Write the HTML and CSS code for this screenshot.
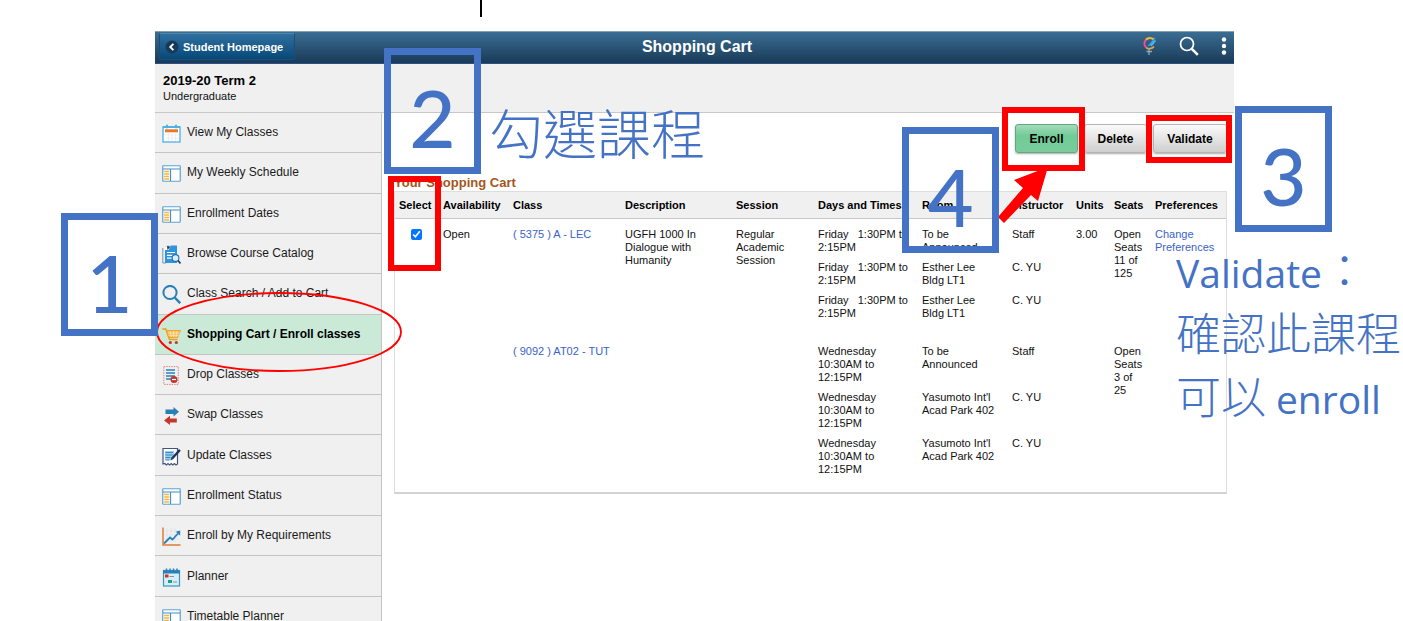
FILE: index.html
```html
<!DOCTYPE html>
<html lang="zh-Hant">
<head>
<meta charset="utf-8">
<title>Shopping Cart</title>
<link rel="stylesheet" href="styles.css">
</head>
<body>
<svg class="defs" aria-hidden="true">
  <symbol id="i-list" viewBox="0 0 19 17">
    <rect x=".75" y=".75" width="17.5" height="15.5" rx=".5" fill="#fff" stroke="#5aa3d3" stroke-width="1.2"/>
    <path d="M1 4h17M8.500 4v12" stroke="#4390c6" stroke-width="1.2"/>
    <path d="M2.200 6.500h4.800M2.200 9h4.800M2.200 11.500h4.800M2.200 14h4.800" stroke="#f5b53a" stroke-width="1.500"/>
  </symbol>
</svg>
<div class="page">
  <header class="topbar">
    <button class="back" type="button">
      <svg class="back-icon" viewBox="0 0 14 14"><circle cx="7" cy="7" r="6.5" fill="#17395a"/><path d="M8.4 3.8 5.2 7l3.2 3.2" fill="none" stroke="#fff" stroke-width="1.8"/></svg>
      Student Homepage
    </button>
    <h1 class="title">Shopping Cart</h1>
    <div class="tools">
      <button class="tool" type="button" aria-label="Navigator">
        <svg width="14" height="20" viewBox="0 0 14 20" fill="none"><path d="M3.2 11.5A5.2 5.2 0 0 1 3 3.800" stroke="#ef4f8f" stroke-width="2"/><path d="M3 3.800A5.200 5.200 0 0 1 10.500 3.400" stroke="#f5b52e" stroke-width="2.200"/><path d="M3.200 11.500C5 13.500 9 13 11 10.500" stroke="#f0a63a" stroke-width="1.800"/><path d="M12.500 1 4 10.500 10.500 8.500Z" fill="#39a5e8"/><path d="M12.500 4.500 8 10" stroke="#4db3ef" stroke-width="1.500"/><path d="M6 12v7M3.500 15.500h5.500" stroke="#8fa9bb" stroke-width="1.300"/></svg>
      </button>
      <button class="tool" type="button" aria-label="Search">
        <svg width="20" height="20" viewBox="0 0 20 20" fill="none" stroke="#fff"><circle cx="8" cy="8" r="6.500" stroke-width="1.700"/><path d="m12.800 12.800 6 6" stroke-width="2.600"/></svg>
      </button>
      <button class="tool" type="button" aria-label="Actions">
        <svg width="6" height="18" viewBox="0 0 6 18" fill="#fff"><circle cx="3" cy="2.500" r="2.200"/><circle cx="3" cy="9" r="2.200"/><circle cx="3" cy="15.500" r="2.200"/></svg>
      </button>
    </div>
  </header>
  <section class="term">
    <h2 class="term-name">2019-20 Term 2</h2>
    <p class="term-career">Undergraduate</p>
  </section>
  <div class="columns">
    <nav class="side">
      <a class="item" href="#"><svg class="icon" viewBox="0 0 19 19"><rect x="1" y="3" width="17" height="15" fill="#fff" stroke="#4fb0e5" stroke-width="1.300"/><path d="M1 3h17" stroke="#4fb0e5" stroke-width="2"/><path d="M5 .8v3.500M14 .8v3.500" stroke="#4fb0e5" stroke-width="2"/><path d="M3 6.800h13" stroke="#e5782a" stroke-width="3"/><path d="M3 11h13M3 14h13M6.500 9v8M10 9v8M13.500 9v8" stroke="#e4eaee" stroke-width=".7"/></svg>View My Classes</a>
      <a class="item" href="#"><svg class="icon"><use href="#i-list"/></svg>My Weekly Schedule</a>
      <a class="item" href="#"><svg class="icon"><use href="#i-list"/></svg>Enrollment Dates</a>
      <a class="item" href="#"><svg class="icon" viewBox="0 0 19 19"><path d="M.8 3v15h3" fill="none" stroke="#7893aa"/><path d="M3 2 5 .5h10v17.500H3Z" fill="#2f94db"/><path d="M3 5V2L5 .5h4L6.500 5Z" fill="#fff"/><path d="m5 1 3.500.5L5.500 5Z" fill="#223a5c"/><path d="M5 7.500h8M5 10.300h6M5 13.100h5" stroke="#fff" stroke-width="1.200"/><circle cx="13.500" cy="13" r="3.400" fill="#d9f1ff" stroke="#1c6fae" stroke-width="1.100"/><path d="m16 15.500 2.500 3" stroke="#223a5c" stroke-width="1.700"/></svg>Browse Course Catalog</a>
      <a class="item" href="#"><svg class="icon" viewBox="0 0 19 19" fill="none" stroke="#2980b9"><circle cx="8" cy="7.500" r="6.600" stroke-width="2"/><path d="m12.700 12.500 5.500 5.700" stroke-width="2.500"/></svg>Class Search / Add to Cart</a>
      <a class="item current" href="#" aria-current="page"><svg class="icon" viewBox="0 0 19 19"><path d="M.3 3h3.500l3.700 10.500h8" fill="none" stroke="#f39c12" stroke-width="1.500"/><path d="M4.500 4.500h14L15.700 11.500H7Z" fill="#f8bd5b" stroke="#f39c12" stroke-width=".8"/><path d="M8 5l1.200 6M11.500 5v6M15 5l-1 6M5.800 7h12M6.400 9.300h10.500" stroke="#fdecc8" stroke-width=".7"/><circle cx="8.300" cy="16.500" r="1.600" fill="#c0392b"/><circle cx="14.300" cy="16.500" r="1.600" fill="#c0392b"/></svg>Shopping Cart / Enroll classes</a>
      <a class="item" href="#"><svg class="icon" viewBox="0 0 19 19"><rect x="1.800" y=".6" width="14.500" height="17.800" fill="none" stroke="#d98880" stroke-dasharray="1.500 1"/><path d="M4 4h9M4 7h9M4 10h9M4 13h5" stroke="#2980b9" stroke-width="1.700"/><circle cx="12" cy="13.500" r="3.500" fill="#c0392b"/><path d="M10 13.500h4" stroke="#fff" stroke-width="1.200"/></svg>Drop Classes</a>
      <a class="item" href="#"><svg class="icon" viewBox="0 0 19 19"><path d="M3.500 3.500h8V1l5.500 4.800-5.500 4.700V8h-8Z" fill="#2980b9"/><path d="M14.800 12.500H8V9.800l-6 4.600L8 19v-2.500h6.800Z" fill="#c0392b"/></svg>Swap Classes</a>
      <a class="item" href="#"><svg class="icon" viewBox="0 0 19 19"><path d="M1 17V1.500h14.500V17l-1.500 1-1.600-1.500L10.800 18l-1.600-1.500L7.600 18 6 16.500 4.400 18 2.800 16.500Z" fill="#fff" stroke="#44527e" stroke-width="1.200"/><path d="M3 4h9v7l-2 2H3Z" fill="#9bcdf0"/><path d="M3.500 5.500h7.500M3.500 8h7M3.500 10.500h5M3.500 13h4" stroke="#3788c4" stroke-width="1.100"/><path d="m8.500 13.500 1-3 7.500-8.500 1.800 1.700-7.600 8.300Z" fill="#223255"/></svg>Update Classes</a>
      <a class="item" href="#"><svg class="icon"><use href="#i-list"/></svg>Enrollment Status</a>
      <a class="item" href="#"><svg class="icon" viewBox="0 0 19 19" fill="none"><path d="M5 1v14M9 1v14M13 1v14M2 4h15M2 8h15M2 12h15" stroke="#dde1e4" stroke-width=".7"/><path d="M1 .5V18h17.500" stroke="#e07b39" stroke-width="1.500"/><path d="m2 16.500 6-6 2.500 2L16 6.500" stroke="#2980b9" stroke-width="1.800"/><path d="M18.200 3.500v5.200l-4.500-4Z" fill="#2980b9"/></svg>Enroll by My Requirements</a>
      <a class="item" href="#"><svg class="icon" viewBox="0 0 19 19"><rect x="1.500" y="2.500" width="16" height="15.500" fill="#d9edf7" stroke="#3498c9" stroke-width="1.200"/><path d="M1 2.500h17v3H1Z" fill="#2980b9"/><path d="M4.500.5v3M8 .5v3M11.500.5v3M15 .5v3" stroke="#2980b9" stroke-width="1.500"/><path d="M3 6.500h3.500v3H3Z" fill="#d62e20"/><path d="M6 12h4v3H6Z" fill="#16a085"/><path d="M7.500 8.500h4.500M11 14h4" stroke="#8195a0" stroke-width="1.100"/></svg>Planner</a>
      <a class="item" href="#"><svg class="icon"><use href="#i-list"/></svg>Timetable Planner</a>
    </nav>
    <main class="main">
      <div class="actions">
        <button class="btn btn-enroll" type="button">Enroll</button>
        <button class="btn" type="button">Delete</button>
        <button class="btn btn-validate" type="button">Validate</button>
      </div>
      <table class="cart">
        <caption class="cart-title">Your Shopping Cart</caption>
        <colgroup><col class="c-select"><col class="c-avail"><col class="c-class"><col class="c-desc"><col class="c-session"><col class="c-days"><col class="c-room"><col class="c-inst"><col class="c-units"><col class="c-seats"><col class="c-pref"></colgroup>
        <thead>
          <tr><th>Select</th><th>Availability</th><th>Class</th><th>Description</th><th>Session</th><th>Days and Times</th><th>Room</th><th>Instructor</th><th>Units</th><th>Seats</th><th>Preferences</th></tr>
        </thead>
        <tbody>
          <tr class="first">
            <td rowspan="3" class="pick"><input class="check" type="checkbox" checked aria-label="Select UGFH 1000"></td>
            <td rowspan="3">Open</td>
            <td rowspan="3"><a class="link" href="#">( 5375 ) A - LEC</a></td>
            <td rowspan="3">UGFH 1000 In<br>Dialogue with<br>Humanity</td>
            <td rowspan="3">Regular<br>Academic<br>Session</td>
            <td>Friday &nbsp; 1:30PM to<br>2:15PM</td><td>To be<br>Announced</td><td>Staff</td>
            <td rowspan="3">3.00</td>
            <td rowspan="3">Open<br>Seats<br>11 of<br>125</td>
            <td rowspan="3"><a class="link" href="#">Change<br>Preferences</a></td>
          </tr>
          <tr><td>Friday &nbsp; 1:30PM to<br>2:15PM</td><td>Esther Lee<br>Bldg LT1</td><td>C. YU</td></tr>
          <tr><td>Friday &nbsp; 1:30PM to<br>2:15PM</td><td>Esther Lee<br>Bldg LT1</td><td>C. YU</td></tr>
        </tbody>
        <tbody>
          <tr class="first second">
            <td rowspan="3"></td><td rowspan="3"></td>
            <td rowspan="3"><a class="link" href="#">( 9092 ) AT02 - TUT</a></td>
            <td rowspan="3"></td><td rowspan="3"></td>
            <td>Wednesday<br>10:30AM to<br>12:15PM</td><td>To be<br>Announced</td><td>Staff</td>
            <td rowspan="3"></td>
            <td rowspan="3">Open<br>Seats<br>3 of<br>25</td>
            <td rowspan="3"></td>
          </tr>
          <tr><td>Wednesday<br>10:30AM to<br>12:15PM</td><td>Yasumoto Int'l<br>Acad Park 402</td><td>C. YU</td></tr>
          <tr><td>Wednesday<br>10:30AM to<br>12:15PM</td><td>Yasumoto Int'l<br>Acad Park 402</td><td>C. YU</td></tr>
        </tbody>
      </table>
    </main>
  </div>
</div>
<div class="notes">
  <div class="cursor"></div>
  <svg class="oval" viewBox="0 0 246 80"><ellipse cx="123" cy="40" rx="122" ry="39" fill="none" stroke="#f00" stroke-width="1.800"/></svg>
  <svg class="arrow" viewBox="0 0 50 58"><path d="M50 0 40 34 33 28 6 56 0 50 25 21 16 13Z" fill="#f00"/></svg>
  <div class="frame frame-select"></div>
  <div class="frame frame-enroll"></div>
  <div class="frame frame-validate"></div>
  <div class="step step-1">1</div>
  <div class="step step-2">2</div>
  <div class="step step-3">3</div>
  <div class="step step-4">4</div>
  <p class="hint hint-select">勾選課程</p>
  <div class="hint hint-validate">
    <p class="hint-line"><span class="latin">Validate</span>：</p>
    <p class="hint-line">確認此課程</p>
    <p class="hint-line">可以 <span class="latin">enroll</span></p>
  </div>
</div>
</body>
</html>
```

FILE: styles.css
```css
* { box-sizing: border-box; }
body {
  margin: 0;
  height: 100vh;
  overflow: hidden;
  background: #fff;
  color: #111;
  font: 12px/13px "Liberation Sans", Arial, sans-serif;
}
h1, h2, p { margin: 0; }
button { font-family: inherit; cursor: pointer; }
a { text-decoration: none; }
.defs { position: absolute; width: 0; height: 0; }

.page { margin: 31px 169px 0 155px; }

.topbar {
  display: grid;
  grid-template-columns: 1fr auto 1fr;
  align-items: center;
  height: 33px;
  padding: 0 7px 2px 4px;
  color: #fff;
  background: linear-gradient(#3a6d93, #1a3a57);
  border-top: 1px solid #8a9da8;
  border-bottom: 1px solid #2a5288;
}
.back {
  justify-self: start;
  display: flex;
  align-items: center;
  gap: 4px;
  height: 27px;
  padding: 0 11px 0 5px;
  border: 1px solid #1c4d75;
  border-top-color: #4e86ae;
  border-radius: 2px;
  background: linear-gradient(#306f9f, #064978);
  color: #fff;
  font-size: 11px;
  font-weight: bold;
}
.back-icon { width: 14px; height: 14px; }
.title { padding-left: 8px; font-size: 16px; line-height: 20px; }
.tools { justify-self: end; display: flex; align-items: center; gap: 22px; padding-bottom: 2px; }
.tool { display: flex; padding: 0; border: 0; background: none; }

.term {
  height: 49px;
  padding: 9px 8px 0;
  background: #f0f0f0;
  border-bottom: 1px solid #c8c8c8;
}
.term-name { font-size: 13px; line-height: 16px; color: #000; }
.term-career { font-size: 11px; line-height: 14px; }

.columns { display: flex; align-items: flex-start; }
.side {
  flex: 0 0 227px;
  display: grid;
  grid-auto-rows: 1fr;
  min-height: 524px;
  background: #f0f0f0;
  border-right: 1px solid #c4c4c4;
}
.item {
  display: flex;
  align-items: center;
  gap: 6px;
  padding-left: 7px;
  border-bottom: 1px solid #c4c4c4;
  color: #1a1a1a;
}
.current { background: #caead7; color: #000; font-weight: bold; }
.icon { width: 19px; height: 19px; margin-top: 2px; }

.main { flex: 1; padding: 11px 7px 0 12px; }
.actions { display: flex; justify-content: flex-end; gap: 6px; }
.btn {
  min-width: 63px;
  height: 29px;
  padding: 0 11px;
  border: 1px solid #b5b5b5;
  border-radius: 3px;
  background: linear-gradient(#fafafa, #cfcfcf);
  box-shadow: 0 1px 2px #aaa;
  color: #000;
  font-size: 12px;
  font-weight: bold;
}
.btn-enroll { border-color: #61a982; background: linear-gradient(#a4dcbb, #72cb97 40%, #78cc9b); }
.btn-validate { min-width: 74px; }

.cart {
  width: 100%;
  margin-top: 22px;
  table-layout: fixed;
  border-collapse: separate;
  border-spacing: 0;
  border: 1px solid #dedede;
  border-bottom: 2px solid #d4d4d4;
}
.cart-title {
  text-align: left;
  color: #a5561c;
  font-size: 13px;
  font-weight: bold;
  line-height: 16px;
}
.c-select { width: 44px; }
.c-avail { width: 70px; }
.c-class { width: 112px; }
.c-desc { width: 111px; }
.c-session { width: 82px; }
.c-days { width: 104px; }
.c-room { width: 90px; }
.c-inst { width: 64px; }
.c-units { width: 38px; }
.c-seats { width: 41px; }
.c-pref { width: 75px; }
.cart th {
  height: 27px;
  padding: 0 0 0 4px;
  text-align: left;
  font-size: 11px;
  color: #000;
  white-space: nowrap;
  background: #f0f0f0;
  border-bottom: 1px solid #c8c8c8;
}
.cart td { padding: 0 0 7px 4px; vertical-align: top; font-size: 11px; white-space: nowrap; }
.cart .first td { padding-top: 9px; }
.cart .second td { padding-top: 18px; }
.cart tbody:last-child tr:last-child td { padding-bottom: 16px; }
.check { display: block; width: 11px; height: 11px; margin: 1px 0 0 12px; }
.link { color: #3a62c8; }

/* Tutorial marks laid over the page */
.notes { position: absolute; inset: 0; overflow: hidden; pointer-events: none; color: #4472c4; }
.notes > * { position: absolute; }
.cursor { left: 480px; top: 0; width: 2px; height: 17px; background: #000; }
.oval { left: 156px; top: 292px; width: 246px; height: 80px; }
.arrow { left: 998px; top: 167px; width: 50px; height: 58px; }
.frame { border: 6px solid #f00; }
.frame-select { left: 388px; top: 176px; width: 53px; height: 95px; }
.frame-enroll { left: 1002px; top: 107px; width: 83px; height: 64px; }
.frame-validate { left: 1146px; top: 115px; width: 86px; height: 48px; }
.step {
  display: flex;
  justify-content: center;
  width: 97px;
  height: 126px;
  padding-top: 14px;
  border: 7px solid #4472c4;
  font: 500 80px/96px Lato, "Open Sans", sans-serif;
}
.step-1 { left: 61px; top: 213px; height: 123px; }
.step-2 { left: 384px; top: 48px; }
.step-3 { left: 1235px; top: 106px; }
.step-4 { left: 902px; top: 127px; }
.hint { font-family: "Noto Sans CJK TC", sans-serif; font-weight: 300; white-space: nowrap; }
.hint-select { left: 489px; top: 100px; font-size: 54px; line-height: 64px; }
.hint-validate { left: 1176px; top: 238px; font-size: 45px; line-height: 62px; }
.hint-line { height: 63px; }
.latin { font: 500 39px/52px "Open Sans", "Noto Sans", sans-serif; }
```
